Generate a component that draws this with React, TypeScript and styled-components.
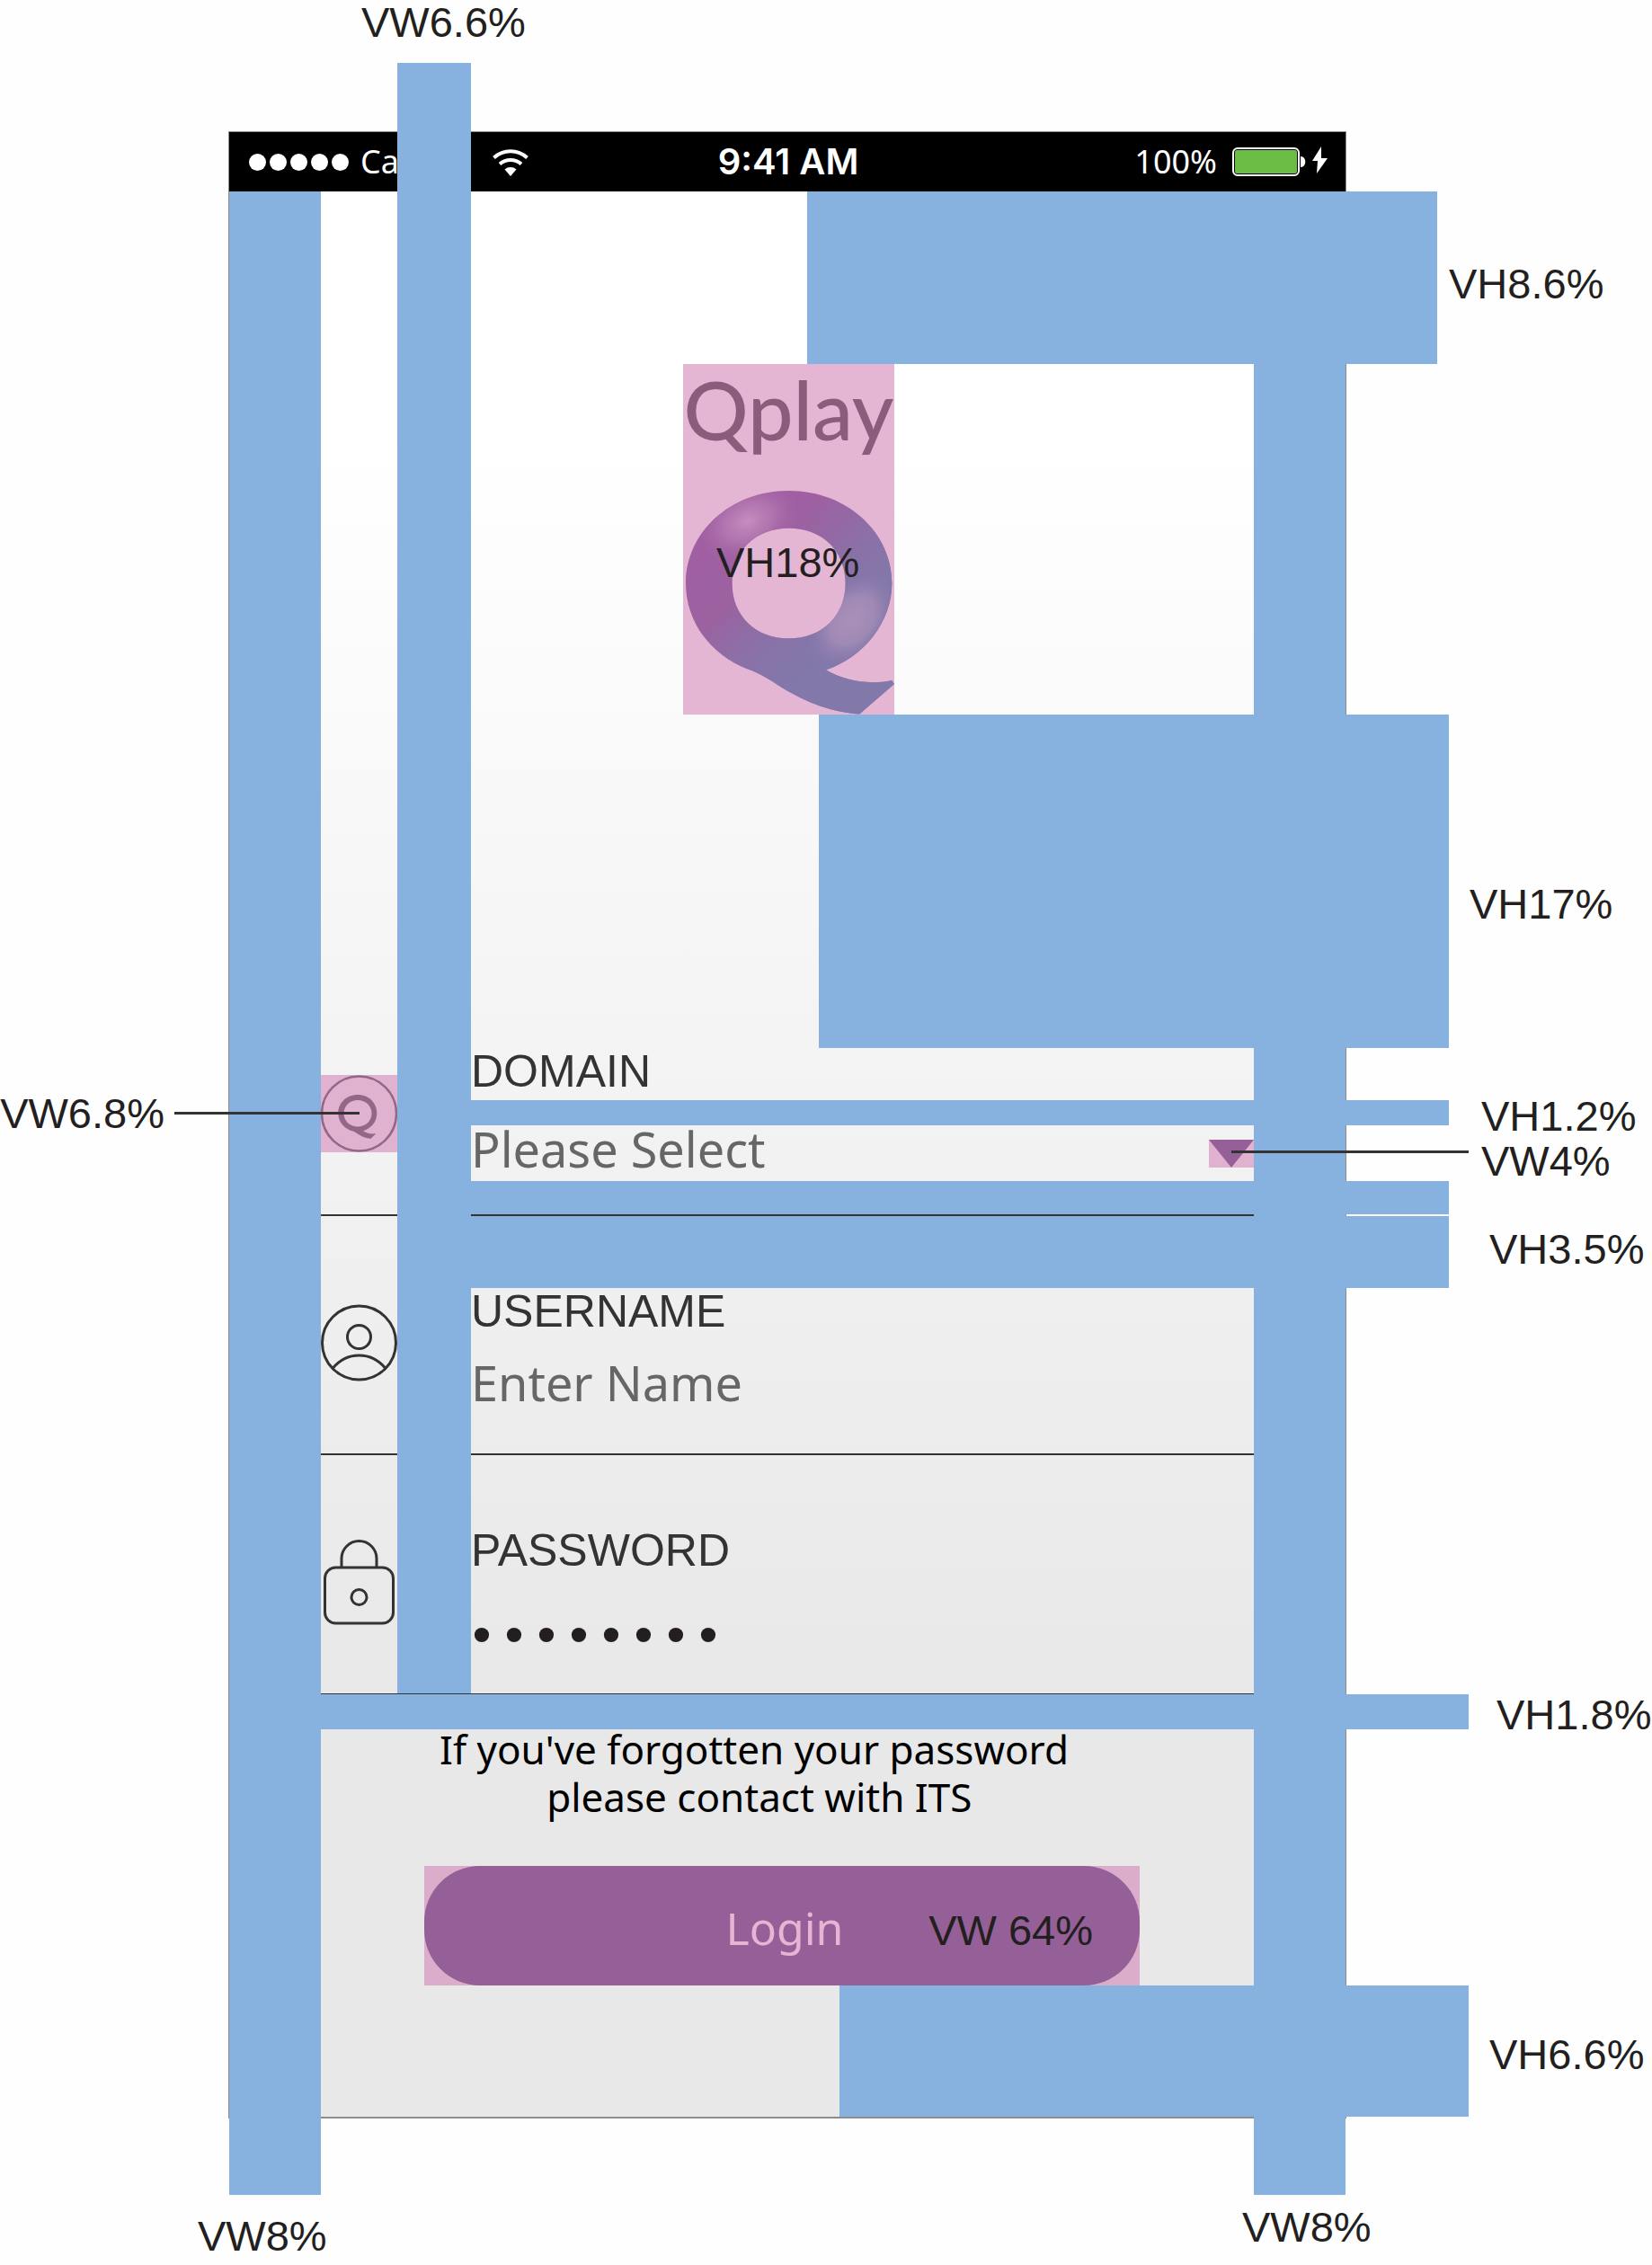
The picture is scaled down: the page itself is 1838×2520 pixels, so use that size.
import React from "react";
import styled, { createGlobalStyle } from "styled-components";

const BLUE = "#87b1df";
const PINK = "#e1b1d0";
const PURPLE = "#955f97";
const INK = "#333333";
const SANS = '"Liberation Sans", Arial, sans-serif';
const HUMANIST = '"Noto Sans", "Open Sans", sans-serif';

const GlobalStyle = createGlobalStyle`
  *, *::before, *::after { box-sizing: border-box; }
  body { margin: 0; background: #fefefe; font-family: ${SANS}; }
`;

const Sheet = styled.main`
  display: grid;
  grid-template-columns: 254px minmax(0, 1fr) 340px;
  padding: 146px 0 163px;
`;

const Phone = styled.section`
  grid-column: 2;
  position: relative;
  border: 1px solid #8d8d8d;
  border-bottom-width: 2px;
`;

const StatusBar = styled.header`
  display: grid;
  grid-template-columns: 1fr auto 1fr;
  align-items: center;
  height: 66px;
  padding: 0 20px 0 22px;
  background: #000;
  color: #fff;
`;

const StatusGroup = styled.div<{ $end?: boolean }>`
  display: flex;
  align-items: center;
  justify-content: ${(p) => (p.$end ? "flex-end" : "flex-start")};
  font: 400 36px/50px "Noto Sans", sans-serif;
`;

const Signal = styled.span`
  display: flex;
  gap: 4px;
  margin-right: 13px;
`;

const SignalDot = styled.span`
  width: 19px;
  height: 19px;
  border-radius: 50%;
  background: #fff;
`;

const Clock = styled.time`
  font: 600 40px/50px Inter, sans-serif;
`;

const WifiIcon = styled.svg`
  width: 40px;
  height: 31px;
  margin-left: 30px;
`;

const BatteryIcon = styled.svg`
  width: 106px;
  height: 36px;
  margin-left: 17px;
`;

const Body = styled.div`
  background: linear-gradient(#ffffff 13%, #e8e8e8 78%);
`;

const Gap = styled.div<{ $height: number }>`
  display: grid;
  height: ${(p) => p.$height}px;
`;

const GapBar = styled.div<{ $shift: number; $reach: number }>`
  display: flow-root;
  margin-left: calc(50% + ${(p) => p.$shift}px);
  margin-right: -${(p) => p.$reach}px;
  background: ${BLUE};
`;

const Bar = styled.div`
  position: absolute;
  background: ${BLUE};
`;

const RowBar = styled(Bar)<{ $top: number; $height: number }>`
  top: ${(p) => p.$top}px;
  height: ${(p) => p.$height}px;
  left: 167px;
  right: -217px;
`;

const NoticeBar = styled.div`
  display: flow-root;
  height: 39px;
  margin: 0 -137px 0 102px;
  background: ${BLUE};
`;

const Column = styled(Bar)<{ $side: "left" | "right" }>`
  top: 66px;
  bottom: -87px;
  width: 102px;
  ${(p) => p.$side}: 0;
`;

const InnerColumn = styled(Bar)`
  top: -77px;
  bottom: 471px;
  left: 187px;
  width: 82px;
`;

const Measure = styled.span`
  display: block;
  width: max-content;
  font: 400 47px/56px ${SANS};
  color: #231f20;
  white-space: nowrap;
`;

const SideMeasure = styled(Measure)<{ $gap: number; $top: number }>`
  margin-left: calc(100% + ${(p) => p.$gap}px);
  margin-top: ${(p) => p.$top}px;
`;

const ColumnMeasure = styled(Measure)<{ $left: number; $top: string }>`
  position: absolute;
  left: ${(p) => p.$left}px;
  top: ${(p) => p.$top};
`;

const LogoArea = styled.div`
  display: flex;
  justify-content: center;
  padding-left: 3px;
`;

const LogoBox = styled.div`
  position: relative;
  width: 235px;
  height: 390px;
  background: #e4b6d4;
  display: flex;
  flex-direction: column;
  align-items: center;
`;

const Wordmark = styled.h1`
  margin: 0;
  font: 500 90px/100px Lato, sans-serif;
  color: #8d5c7c;
`;

const LogoMark = styled.svg`
  width: 235px;
  height: 250px;
  margin-top: 40px;
`;

const LogoMeasure = styled(Measure)`
  position: absolute;
  left: 37px;
  top: 193px;
`;

const Fields = styled.div`
  padding: 0 102px;
`;

const Row = styled.div<{ $line: number; $top: number; $bottom: number }>`
  position: relative;
  display: grid;
  grid-template-columns: 85px minmax(0, 1fr);
  column-gap: 82px;
  align-items: start;
  padding: ${(p) => p.$top}px 0 ${(p) => p.$bottom}px;
  border-bottom: ${(p) => p.$line}px solid ${INK};
`;

const IconCell = styled.div<{ $top: number; $marked?: boolean }>`
  position: relative;
  margin-top: ${(p) => p.$top}px;
  z-index: 2;
  background: ${(p) => (p.$marked ? PINK : "transparent")};
  svg { display: block; width: 85px; }
`;

const IconLine = styled.span`
  position: absolute;
  right: 50%;
  top: 41px;
  width: 206px;
  height: 3px;
  background: ${INK};
`;

const IconMeasure = styled(Measure)`
  position: absolute;
  right: calc(100% + 174px);
  top: 15px;
`;

const Field = styled.div<{ $gap: number }>`
  position: relative;
  display: flex;
  flex-direction: column;
  gap: ${(p) => p.$gap}px;
`;

const FieldLabel = styled.label`
  font: 400 50px/52px ${SANS};
  color: ${INK};
`;

const valueText = `
  width: 100%;
  height: 74px;
  margin: 0;
  padding: 0;
  border: 0;
  outline: 0;
  background: transparent;
  color: #666666;
  opacity: 1;
  appearance: none;
`;

const Select = styled.select`
  ${valueText}
  font: 400 54px/74px ${HUMANIST};
`;

const TextInput = styled.input`
  ${valueText}
  font: 400 54px/74px ${HUMANIST};
  &::placeholder { color: #666666; opacity: 1; }
`;

const PasswordInput = styled.input`
  ${valueText}
  color: #231f20;
  font: 400 60px/74px "Liberation Mono", monospace;
  text-indent: -6px;
`;

const Arrow = styled.span`
  position: absolute;
  right: 0;
  bottom: 16px;
  width: 50px;
  height: 31px;
  background: ${PINK};
  z-index: 2;
  pointer-events: none;
  &::before {
    content: "";
    position: absolute;
    inset: 0;
    background: ${PURPLE};
    clip-path: polygon(0 0, 100% 0, 50% 100%);
  }
`;

const ArrowLine = styled.span`
  position: absolute;
  left: 25px;
  top: 12px;
  width: 264px;
  height: 3px;
  background: ${INK};
`;

const ArrowMeasure = styled(Measure)`
  position: absolute;
  left: 303px;
  top: -4px;
`;

const Notice = styled.p`
  margin: -4px 0 50px;
  padding-right: 74px;
  text-align: center;
  color: #000;
  font: 400 44px/53px ${HUMANIST};
`;

const LoginFrame = styled.div`
  position: relative;
  margin: 0 229px 0 217px;
  background: #dcadcb;
`;

const LoginButton = styled.button`
  display: block;
  width: 100%;
  height: 133px;
  padding: 4px 0 0 6px;
  border: 0;
  border-radius: 62px;
  background: ${PURPLE};
  color: #e7b5d4;
  font: 400 50px/60px ${HUMANIST};
`;

const LoginMeasure = styled(Measure)`
  position: absolute;
  right: 52px;
  top: 44px;
`;

const Wifi = () => (
  <WifiIcon viewBox="0 0 40 31" aria-hidden="true" fill="none" stroke="#fff" strokeWidth="4">
    <path d="M1.5 10.500a27 27 0 0 1 37 0" />
    <path d="M8 17.500a18 18 0 0 1 24 0" />
    <path d="M13.500 23.500a10 10 0 0 1 13 0L20 31Z" fill="#fff" stroke="none" />
  </WifiIcon>
);

const Battery = () => (
  <BatteryIcon viewBox="0 0 106 36" aria-hidden="true">
    <rect x="1" y="3" width="73" height="30" rx="5" fill="none" stroke="#fff" strokeWidth="2" />
    <rect x="3" y="5" width="69" height="26" rx="2" fill="#69bd45" />
    <path d="M76 12c7 0 7 12 0 12Z" fill="#fff" />
    <path d="M99 1 89 17h6l-1 14 12-17h-7Z" fill="#fff" />
  </BatteryIcon>
);

const QMark = () => (
  <LogoMark viewBox="60 465 705 750" preserveAspectRatio="none" aria-hidden="true">
    <defs>
      <linearGradient id="ring" gradientUnits="userSpaceOnUse" x1="180" y1="620" x2="560" y2="1120">
        <stop offset="0" stopColor="#a05fa3" />
        <stop offset="0.35" stopColor="#9b62a0" />
        <stop offset="0.75" stopColor="#8b71a6" />
        <stop offset="1" stopColor="#817bab" />
      </linearGradient>
      <linearGradient id="cool" gradientUnits="userSpaceOnUse" x1="470" y1="540" x2="740" y2="780">
        <stop offset="0" stopColor="#8278aa" stopOpacity="0" />
        <stop offset="1" stopColor="#8278aa" stopOpacity="0.9" />
      </linearGradient>
      <radialGradient id="shine">
        <stop offset="0" stopColor="#c68fc0" />
        <stop offset="0.5" stopColor="#b87db4" stopOpacity="0.65" />
        <stop offset="1" stopColor="#a565a5" stopOpacity="0" />
      </radialGradient>
      <radialGradient id="glow">
        <stop offset="0" stopColor="#aa90b8" />
        <stop offset="0.5" stopColor="#a68eb8" stopOpacity="0.8" />
        <stop offset="1" stopColor="#8b7aac" stopOpacity="0" />
      </radialGradient>
      <clipPath id="shape">
        <path
          clipRule="evenodd"
          d="M413 468C610 468 757 610 757 776C757 905 665 1022 537 1066C600 1103 680 1117 757 1101L765 1113L648 1214C540 1205 450 1165 370 1112C335 1090 315 1078 280 1065C150 1015 69 905 69 776C69 610 215 468 413 468ZM413 593C302 593 224 668 224 777C224 886 302 961 413 961C524 961 602 886 602 777C602 668 524 593 413 593Z"
        />
      </clipPath>
    </defs>
    <g clipPath="url(#shape)">
      <rect x="60" y="465" width="705" height="750" fill="url(#ring)" />
      <rect x="60" y="465" width="705" height="750" fill="url(#cool)" />
      <ellipse cx="275" cy="570" rx="180" ry="125" fill="url(#shine)" transform="rotate(-25 275 570)" />
      <ellipse cx="625" cy="900" rx="180" ry="125" fill="url(#glow)" transform="rotate(-50 625 900)" />
    </g>
  </LogoMark>
);

const DomainIcon = () => (
  <svg viewBox="0 0 85 86" aria-hidden="true" fill="none" stroke="#936787">
    <circle cx="42.5" cy="43" r="41.5" strokeWidth="2.5" />
    <path
      fill="#936787"
      stroke="none"
      fillRule="evenodd"
      d="M41 22C53.500 22 62.300 31 62.300 42.500C62.300 52 56 59.500 47 62.300C51 65 56 66 61.300 65L55.700 70.700C47 70.500 42 66 36.500 62.800C26.500 60.500 19.300 52.500 19.300 42.500C19.300 31 28.500 22 41 22ZM41 28C32 28 25.500 34.500 25.500 42.800C25.500 51 32 57.500 41 57.500C50 57.500 56.500 51 56.500 42.800C56.500 34.500 50 28 41 28Z"
    />
  </svg>
);

const UserIcon = () => (
  <svg viewBox="0 0 85 86" aria-hidden="true" fill="none" stroke={INK} strokeWidth="3">
    <circle cx="42.5" cy="43" r="41" />
    <circle cx="42.5" cy="36.5" r="13" />
    <path d="M13 71.5Q25 57 42.5 57T72 71.5" />
  </svg>
);

const LockIcon = () => (
  <svg viewBox="0 0 85 95" aria-hidden="true" fill="none" stroke={INK} strokeWidth="3">
    <path d="M23 30V21a19.500 19.500 0 0 1 39 0V30" />
    <rect x="4.500" y="31" width="76" height="62" rx="12" />
    <circle cx="42.500" cy="64" r="8.500" />
  </svg>
);

export default function App() {
  return (
    <>
      <GlobalStyle />
      <Sheet>
        <Phone>
          <StatusBar>
            <StatusGroup>
              <Signal>
                {[0, 1, 2, 3, 4].map((n) => (
                  <SignalDot key={n} />
                ))}
              </Signal>
              Carrier
              <Wifi />
            </StatusGroup>
            <Clock>9:41 AM</Clock>
            <StatusGroup $end>
              100%
              <Battery />
            </StatusGroup>
          </StatusBar>

          <Body>
            <Gap $height={192}>
              <GapBar $shift={22} $reach={102}>
                <SideMeasure $gap={13} $top={75}>VH8.6%</SideMeasure>
              </GapBar>
            </Gap>
            <LogoArea>
              <LogoBox>
                <Wordmark>Qplay</Wordmark>
                <QMark />
                <LogoMeasure>VH18%</LogoMeasure>
              </LogoBox>
            </LogoArea>
            <Gap $height={371}>
              <GapBar $shift={35} $reach={115}>
                <SideMeasure $gap={23} $top={183}>VH17%</SideMeasure>
              </GapBar>
            </Gap>

            <form onSubmit={(e) => e.preventDefault()}>
              <Fields>
                <Row $line={2} $top={0} $bottom={36}>
                  <RowBar $top={58} $height={28}>
                    <SideMeasure $gap={36} $top={-10}>VH1.2%</SideMeasure>
                  </RowBar>
                  <RowBar $top={148} $height={37} />
                  <IconCell $top={30} $marked>
                    <DomainIcon />
                    <IconLine />
                    <IconMeasure>VW6.8%</IconMeasure>
                  </IconCell>
                  <Field $gap={23}>
                    <FieldLabel htmlFor="domain">DOMAIN</FieldLabel>
                    <Select id="domain" defaultValue="">
                      <option value="">Please Select</option>
                    </Select>
                    <Arrow>
                      <ArrowLine />
                      <ArrowMeasure>VW4%</ArrowMeasure>
                    </Arrow>
                  </Field>
                </Row>
                <Row $line={2} $top={80} $bottom={42}>
                  <RowBar $top={0} $height={80}>
                    <SideMeasure $gap={45} $top={9}>VH3.5%</SideMeasure>
                  </RowBar>
                  <IconCell $top={18}>
                    <UserIcon />
                  </IconCell>
                  <Field $gap={16}>
                    <FieldLabel htmlFor="username">USERNAME</FieldLabel>
                    <TextInput id="username" type="text" placeholder="Enter Name" />
                  </Field>
                </Row>
                <Row $line={1} $top={80} $bottom={24}>
                  <IconCell $top={14}>
                    <LockIcon />
                  </IconCell>
                  <Field $gap={35}>
                    <FieldLabel htmlFor="password">PASSWORD</FieldLabel>
                    <PasswordInput id="password" type="password" defaultValue="qplay123" />
                  </Field>
                </Row>
              </Fields>

              <NoticeBar>
                <SideMeasure $gap={31} $top={-5}>VH1.8%</SideMeasure>
              </NoticeBar>
              <Notice>
                If you've forgotten your password
                <br />
                {"\u00a0"}please contact with ITS
              </Notice>
              <LoginFrame>
                <LoginButton type="submit">Login</LoginButton>
                <LoginMeasure>VW 64%</LoginMeasure>
              </LoginFrame>
            </form>
            <Gap $height={146}>
              <GapBar $shift={58} $reach={137}>
                <SideMeasure $gap={23} $top={49}>VH6.6%</SideMeasure>
              </GapBar>
            </Gap>
          </Body>

          <Column $side="left">
            <ColumnMeasure $left={-35} $top="calc(100% + 18px)">VW8%</ColumnMeasure>
          </Column>
          <InnerColumn>
            <ColumnMeasure $left={-40} $top="-73px">VW6.6%</ColumnMeasure>
          </InnerColumn>
          <Column $side="right">
            <ColumnMeasure $left={-13} $top="calc(100% + 8px)">VW8%</ColumnMeasure>
          </Column>
        </Phone>
      </Sheet>
    </>
  );
}
